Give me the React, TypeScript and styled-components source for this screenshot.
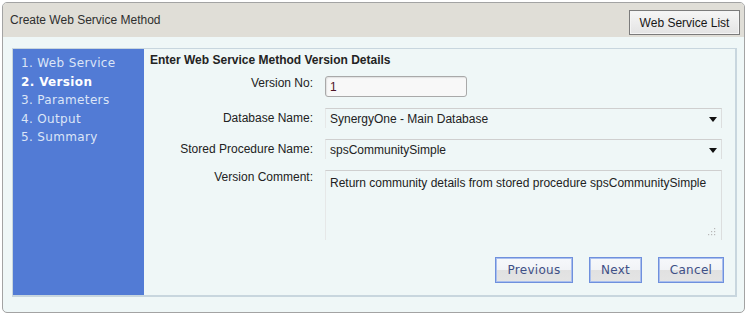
import React from "react";
import styled, { createGlobalStyle } from "styled-components";

const GlobalStyle = createGlobalStyle`
  body {
    margin: 0;
    background: #ffffff;
    font-family: "Liberation Sans", Arial, sans-serif;
  }
`;

const Panel = styled.div`
  margin: 2px;
  width: 741px;
  height: 309px;
  border: 1px solid #a3a3a3;
  border-radius: 5px;
  overflow: hidden;
  display: flex;
  flex-direction: column;
  background: #eff7f7;
`;

const Header = styled.div`
  height: 34px;
  flex: none;
  background: #e0ded7;
  display: flex;
  justify-content: space-between;
  align-items: flex-start;
  padding: 0 4px 0 7px;
`;

const Title = styled.div`
  margin-top: 10px;
  font-size: 12px;
  line-height: 15px;
  color: #2e2e2e;
`;

const ListButton = styled.button`
  margin-top: 7px;
  width: 111px;
  height: 25px;
  border: 1px solid #7b7b7b;
  box-shadow: inset 0 0 0 1px #f4f4f4;
  background: linear-gradient(#f6f6f6, #e3e3e3);
  font-family: "Liberation Sans", Arial, sans-serif;
  font-size: 12px;
  color: #161616;
  padding: 0;
`;

const Body = styled.div`
  flex: 1;
  padding: 11px 7px 15px 9px;
  display: flex;
`;

const Wizard = styled.div`
  flex: 1;
  display: flex;
  border: 1px solid #c8d6de;
  border-right-width: 2px;
  border-bottom-width: 2px;
`;

const Steps = styled.ul`
  width: 131px;
  flex: none;
  margin: 0;
  padding: 5px 0 0 8px;
  box-sizing: border-box;
  list-style: none;
  background: #527bd5;
`;

const Step = styled.li<{ active?: boolean }>`
  font-family: "DejaVu Sans", Verdana, sans-serif;
  font-size: 12px;
  line-height: 18.5px;
  letter-spacing: 0.35px;
  color: ${(p) => (p.active ? "#ffffff" : "#dce5f7")};
  font-weight: ${(p) => (p.active ? "bold" : "normal")};
`;

const Content = styled.div`
  flex: 1;
  display: flex;
  flex-direction: column;
  padding: 4px 13px 12px 6px;
`;

const Heading = styled.div`
  font-size: 12px;
  font-weight: bold;
  line-height: 14px;
  color: #232323;
`;

const Form = styled.div`
  margin-top: 9px;
  display: grid;
  grid-template-columns: 163px 1fr;
  column-gap: 12px;
  row-gap: 11px;
`;

const Label = styled.div<{ offset: number }>`
  text-align: right;
  font-size: 12px;
  line-height: 14px;
  padding-top: ${(p) => p.offset}px;
  color: #222;
`;

const TextBox = styled.div`
  width: 142px;
  height: 21px;
  box-sizing: border-box;
  border: 1px solid #a9a9a9;
  border-radius: 3px;
  background: #f8f8f8;
  box-shadow: inset 1px 1px 1px #e2e2e2;
  padding: 3px 4px;
  font-size: 12px;
  line-height: 14px;
  color: #4d1426;
`;

const Select = styled.div`
  height: 20px;
  box-sizing: border-box;
  border-top: 1px solid #cfcfcf;
  border-left: 1px solid #e6e8e8;
  border-right: 1px solid #dcdede;
  display: flex;
  align-items: center;
  justify-content: space-between;
  padding: 0 4px 0 4px;
  font-size: 12px;
  color: #222;
`;

const Arrow = styled.span`
  width: 0;
  height: 0;
  border-left: 4px solid transparent;
  border-right: 4px solid transparent;
  border-top: 5px solid #111;
  margin-top: 2px;
`;

const Comment = styled.div`
  position: relative;
  height: 70px;
  box-sizing: border-box;
  border-top: 1px solid #cfcfcf;
  border-left: 1px solid #e6e8e8;
  border-right: 1px solid #dcdede;
  padding: 5px 4px;
  font-size: 12px;
  line-height: 14px;
  color: #222;
`;

const Grip = styled.svg`
  position: absolute;
  right: 5px;
  bottom: 4px;
`;

const Actions = styled.div`
  margin-top: auto;
  margin-right: -2px;
  display: flex;
  justify-content: flex-end;
  gap: 16px;
`;

const NavButton = styled.button<{ w: number }>`
  width: ${(p) => p.w}px;
  height: 26px;
  padding: 0;
  border: 1px solid #6f90dd;
  box-shadow: inset 0 0 0 1px #a9bfee;
  background: linear-gradient(#f6f8fb 0%, #f1f3f6 50%, #e1e1e1 51%, #e4e4e4 100%);
  font-family: "DejaVu Sans", Verdana, sans-serif;
  font-size: 12px;
  letter-spacing: 0.3px;
  color: #3e4f86;
`;

export default function App() {
  return (
    <>
      <GlobalStyle />
      <Panel>
        <Header>
          <Title>Create Web Service Method</Title>
          <ListButton>Web Service List</ListButton>
        </Header>
        <Body>
          <Wizard>
            <Steps>
              <Step>1. Web Service</Step>
              <Step active>2. Version</Step>
              <Step>3. Parameters</Step>
              <Step>4. Output</Step>
              <Step>5. Summary</Step>
            </Steps>
            <Content>
              <Heading>Enter Web Service Method Version Details</Heading>
              <Form>
                <Label offset={0}>Version No:</Label>
                <TextBox>1</TextBox>
                <Label offset={3}>Database Name:</Label>
                <Select>
                  <span>SynergyOne - Main Database</span>
                  <Arrow />
                </Select>
                <Label offset={3}>Stored Procedure Name:</Label>
                <Select>
                  <span>spsCommunitySimple</span>
                  <Arrow />
                </Select>
                <Label offset={0}>Version Comment:</Label>
                <Comment>
                  Return community details from stored procedure spsCommunitySimple
                  <Grip width="8" height="8" viewBox="0 0 8 8">
                    <rect x="6" y="0" width="1.2" height="1.2" fill="#b8b8b8" />
                    <rect x="3" y="3" width="1.2" height="1.2" fill="#b8b8b8" />
                    <rect x="6" y="3" width="1.2" height="1.2" fill="#b8b8b8" />
                    <rect x="0" y="6" width="1.2" height="1.2" fill="#b8b8b8" />
                    <rect x="3" y="6" width="1.2" height="1.2" fill="#b8b8b8" />
                    <rect x="6" y="6" width="1.2" height="1.2" fill="#b8b8b8" />
                  </Grip>
                </Comment>
              </Form>
              <Actions>
                <NavButton w={78}>Previous</NavButton>
                <NavButton w={53}>Next</NavButton>
                <NavButton w={66}>Cancel</NavButton>
              </Actions>
            </Content>
          </Wizard>
        </Body>
      </Panel>
    </>
  );
}
